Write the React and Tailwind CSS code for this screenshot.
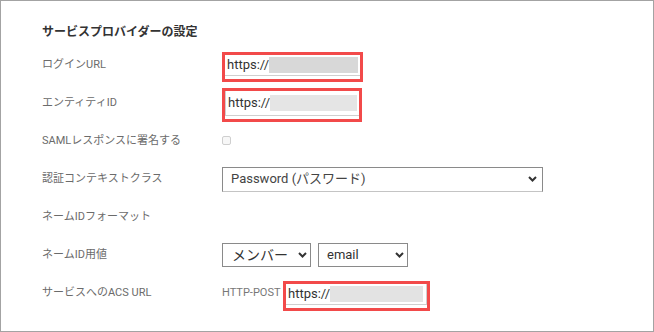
import React from "react";

const font = { fontFamily: '"Roboto", "Noto Sans CJK JP", sans-serif' };

function Chevron() {
  return (
    <svg width="9" height="6" viewBox="0 0 9 6" className="shrink-0">
      <path d="M1 1 L4.5 4.5 L8 1" fill="none" stroke="#333" strokeWidth="2" />
    </svg>
  );
}

function Row({ label, children }) {
  return (
    <div className="flex h-[38px] items-center">
      <div className="w-[180px] shrink-0 text-[11px] text-[#6b6b6b]">{label}</div>
      {children}
    </div>
  );
}

function UrlBox({ blur, tall }) {
  return (
    <div className="border-[3px] border-[#f24a4a] bg-white">
      <div
        className={`flex items-center px-[2px] border-b border-[#cfcfcf] ${
          tall ? "h-[25px] border-l" : "h-[21px]"
        }`}
      >
        <span className="text-[13px] text-[#333]">https://</span>
        <span className={`h-[16px] w-[91px] ${blur}`}></span>
      </div>
      <div className="h-[3px]"></div>
    </div>
  );
}

export default function App() {
  return (
    <div
      className="w-[654px] h-[332px] bg-white border border-[#a3a3a3] pl-[41px] pt-[16px]"
      style={font}
    >
      <div className="h-[29px] flex items-center text-[12px] font-bold text-[#333]">
        サービスプロバイダーの設定
      </div>

      <Row label="ログインURL">
        <div className="w-[141px] mt-[3px]">
          <UrlBox blur="bg-[#d8d8d8]" />
        </div>
      </Row>

      <Row label="エンティティID">
        <div className="w-[140px] mt-[4px]">
          <UrlBox blur="bg-[#e5e5e5]" tall />
        </div>
      </Row>

      <Row label="SAMLレスポンスに署名する">
        <div className="w-[9px] h-[9px] mt-[-2px] border border-[#cfcfcf] rounded-[2px] bg-[#f7f7f7]"></div>
      </Row>

      <Row label="認証コンテキストクラス">
        <div className="w-[321px] h-[25px] flex items-center justify-between pl-[8px] pr-[5px] border border-[#8a8a8a] border-b-[#c4c4c4] text-[13px] text-[#444]">
          <span>Password (パスワード)</span>
          <Chevron />
        </div>
      </Row>

      <Row label="ネームIDフォーマット" />

      <Row label="ネームID用値">
        <div className="flex gap-[7px]">
          <div className="w-[89px] h-[24px] flex items-center justify-between pl-[9px] pr-[3px] border border-[#8a8a8a] text-[14px] text-[#333]">
            <span>メンバー</span>
            <Chevron />
          </div>
          <div className="w-[90px] h-[24px] flex items-center justify-between pl-[8px] pr-[3px] border border-[#8a8a8a] text-[13px] text-[#333]">
            <span>email</span>
            <Chevron />
          </div>
        </div>
      </Row>

      <Row label="サービスへのACS URL">
        <div className="flex items-center">
          <span className="w-[61px] text-[11px] text-[#777]">HTTP-POST</span>
          <div className="mt-[6px] w-[147px] border-[3px] border-[#f24a4a] bg-white pb-[3px]">
            <div className="h-[21px] flex items-center px-[2px] border-b border-r border-[#cfcfcf]">
              <span className="text-[13px] text-[#333]">https://</span>
              <span className="h-[16px] w-[93px] bg-[#e3e3e3]"></span>
            </div>
          </div>
        </div>
      </Row>
    </div>
  );
}
